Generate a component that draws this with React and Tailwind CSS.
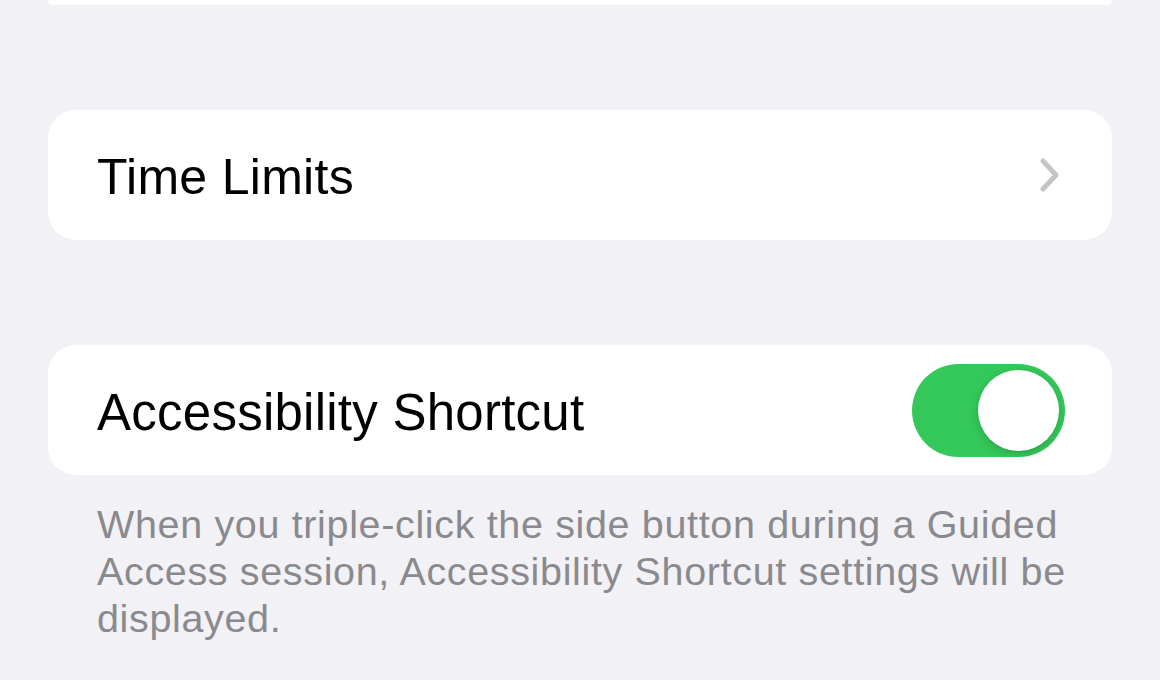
import React from 'react';

function Chevron() {
  return (
    <svg width="20" height="34" viewBox="0 0 20 34" fill="none">
      <path d="M3 3 L16 17 L3 31" stroke="#c4c4c7" strokeWidth="5" strokeLinecap="round" strokeLinejoin="round" />
    </svg>
  );
}

function Toggle({ on }) {
  return (
    <div className={`w-[153px] h-[93px] rounded-full p-[6px] flex ${on ? 'bg-[#34c759] justify-end' : 'bg-[#e9e9eb] justify-start'}`}>
      <div className="w-[81px] h-[81px] rounded-full bg-white shadow-[0_3px_8px_rgba(0,0,0,0.15),0_1px_1px_rgba(0,0,0,0.06)]" />
    </div>
  );
}

export default function App() {
  return (
    <div
      className="w-[1160px] h-[680px] overflow-hidden bg-[#f2f1f6] px-[48px]"
      style={{ fontFamily: '"Liberation Sans", Arial, sans-serif' }}
    >
      {/* tail of the previous group */}
      <div className="h-[5px] bg-white rounded-b-[28px]" />

      <div className="mt-[105px] h-[130px] bg-white rounded-[28px] flex items-center justify-between pl-[49px] pr-[52px]">
        <span className="text-[50px] tracking-[0.3px] text-black leading-none pt-[4px]">Time Limits</span>
        <Chevron />
      </div>

      <div className="mt-[105px] h-[130px] bg-white rounded-[28px] flex items-center justify-between pl-[49px] pr-[47px]">
        <span className="text-[51px] tracking-[0.25px] text-black leading-none pt-[4px]">Accessibility Shortcut</span>
        <Toggle on />
      </div>

      <p className="mt-[26px] pl-[49px] pr-[20px] text-[39.5px] tracking-[0.65px] leading-[47px] text-[#8a8a8e]">
        When you triple-click the side button during a Guided Access session, Accessibility Shortcut settings will be displayed.
      </p>
    </div>
  );
}
